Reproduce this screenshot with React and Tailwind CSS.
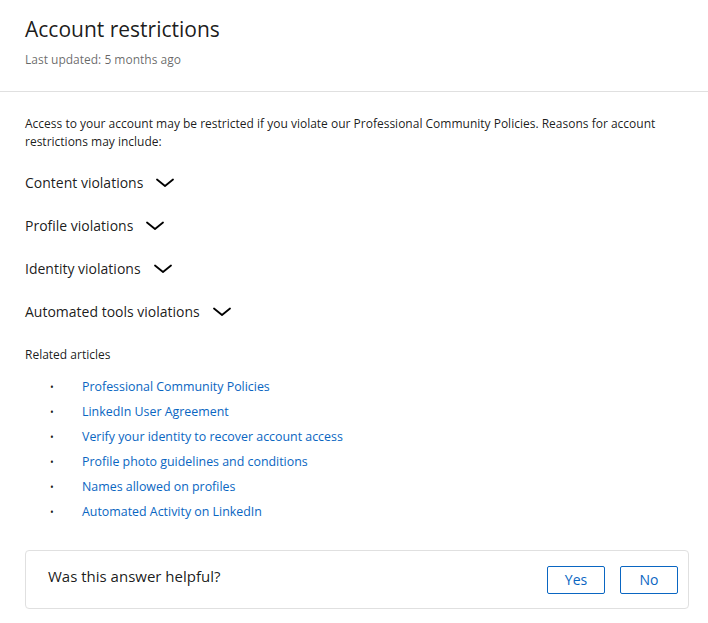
import React from 'react';

const sections = [
  'Content violations',
  'Profile violations',
  'Identity violations',
  'Automated tools violations',
];

const articles = [
  'Professional Community Policies',
  'LinkedIn User Agreement',
  'Verify your identity to recover account access',
  'Profile photo guidelines and conditions',
  'Names allowed on profiles',
  'Automated Activity on LinkedIn',
];

const Chevron = () => (
  <svg width="18" height="10" viewBox="0 0 18 10" fill="none" className="ml-[13px]">
    <path d="M1 1.5 L9 8 L17 1.5" stroke="#000" strokeWidth="1.8" strokeLinecap="round" strokeLinejoin="round" />
  </svg>
);

const App = () => {
  return (
    <div className="w-[708px] min-h-[623px] bg-white text-[#000000e6] font-['Open_Sans',sans-serif]">
      <div className="pl-[25px] pt-[15px] pb-[22px]">
        <h1 className="text-[21px] leading-[28px] text-[#000000e6]">Account restrictions</h1>
        <p className="text-[12px] leading-[18px] text-[#00000099] mt-[8px]">Last updated: 5 months ago</p>
      </div>
      <div className="border-t border-[#e0e0e0]" />
      <div className="pl-[25px] pr-[19px] pt-[23px]">
        <p className="text-[12px] leading-[18px] pr-[20px]">
          Access to your account may be restricted if you violate our Professional Community Policies. Reasons for account restrictions may include:
        </p>
        <div className="mt-[10px]">
          {sections.map((s) => (
            <div key={s} className="flex items-center h-[43px] text-[14px]">
              <span>{s}</span>
              <Chevron />
            </div>
          ))}
        </div>
        <p className="text-[12px] leading-[18px] mt-[13px]">Related articles</p>
        <ul className="mt-[11px]">
          {articles.map((a) => (
            <li key={a} className="flex items-center h-[25px] text-[12.4px]">
              <span className="w-[57px] pl-[25px] text-[10px]">•</span>
              <a className="text-[#0a66c2]">{a}</a>
            </li>
          ))}
        </ul>
        <div className="mt-[25px] mb-[16px] h-[59px] border border-[#e0e0e0] rounded-[4px] flex items-center justify-between pl-[22px] pr-[10px]">
          <span className="text-[15px] -mt-[6px]">Was this answer helpful?</span>
          <div className="flex gap-[15px]">
            <button className="w-[58px] h-[28px] border border-[#0a66c2] rounded-[2px] text-[#0a66c2] text-[14px]">Yes</button>
            <button className="w-[58px] h-[28px] border border-[#0a66c2] rounded-[2px] text-[#0a66c2] text-[14px]">No</button>
          </div>
        </div>
      </div>
    </div>
  );
};

export default App;
